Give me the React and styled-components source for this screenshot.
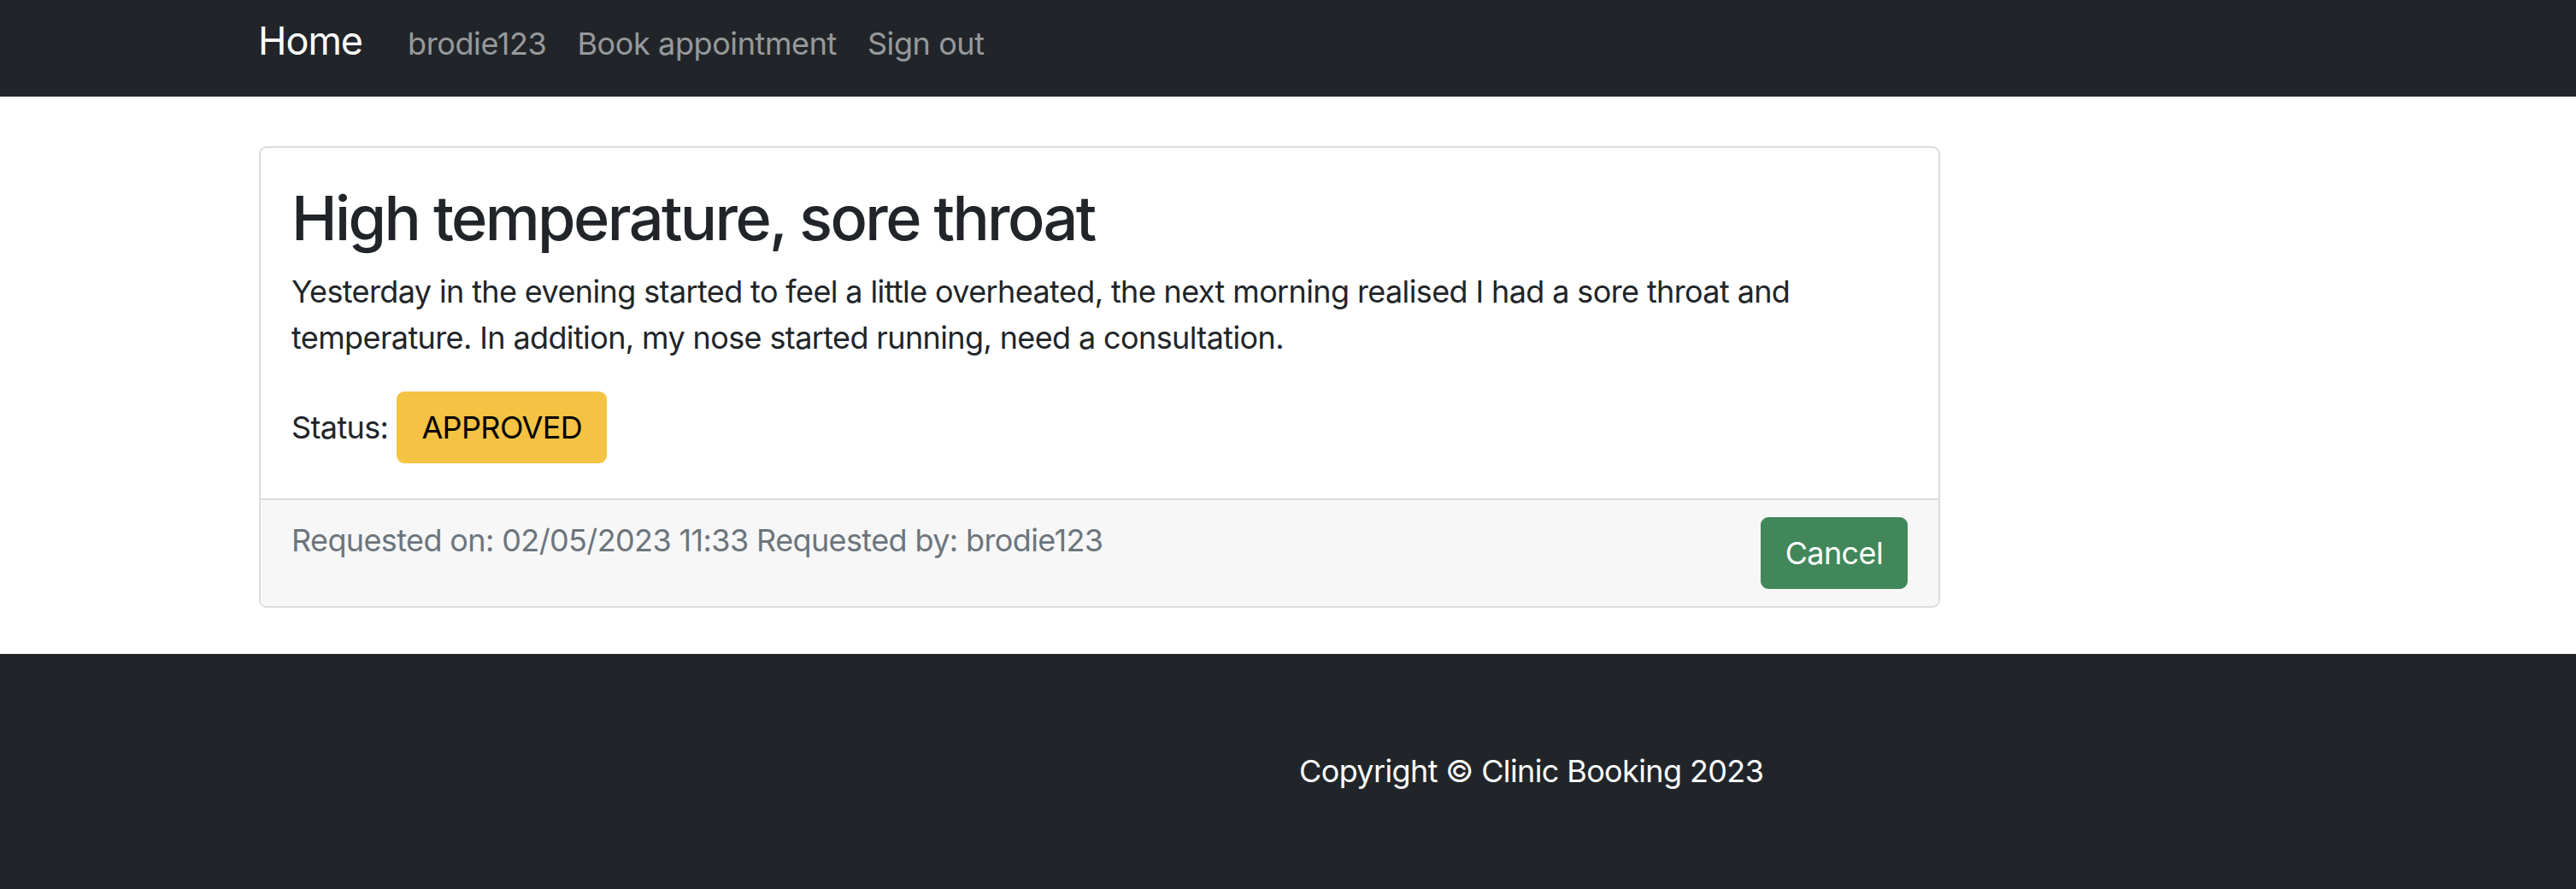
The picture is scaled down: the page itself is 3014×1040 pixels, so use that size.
import React from "react";
import styled, { createGlobalStyle } from "styled-components";

const GlobalStyle = createGlobalStyle`
  html, body { margin: 0; padding: 0; background: #ffffff; }
  body {
    font-family: Inter, "Open Sans", "Liberation Sans", sans-serif;
    color: #212529;
    font-size: 36px;
    line-height: 1.5;
    letter-spacing: -0.62px;
  }
  * { box-sizing: border-box; }
`;

const Page = styled.div`
  display: flex;
  flex-direction: column;
  min-height: 1040px;
`;

const NavBar = styled.nav`
  background: #212529;
  height: 113px;
  flex: none;
`;

const NavInner = styled.div`
  margin-left: 302px;
  display: flex;
  align-items: baseline;
  padding-top: 14px;
`;

const Brand = styled.a`
  font-size: 45px;
  line-height: 1.5;
  letter-spacing: -1px;
  color: #ffffff;
  text-decoration: none;
  margin-right: 35px;
`;

const NavLink = styled.a`
  font-size: 36px;
  line-height: 1.5;
  letter-spacing: -0.4px;
  color: rgba(255, 255, 255, 0.55);
  text-decoration: none;
  padding: 0 18px;
`;

const Main = styled.main`
  padding: 58px 0 54px 303px;
`;

const Card = styled.div`
  width: 1967px;
  border: 2px solid #dcdcdc;
  border-radius: 9px;
  background: #ffffff;
  overflow: hidden;
`;

const CardBody = styled.div`
  padding: 39px 36px 41px;
`;

const Title = styled.h2`
  margin: 0 0 16px;
  font-size: 72px;
  font-weight: 500;
  line-height: 1.2;
  letter-spacing: -2.6px;
  color: #212529;
`;

const Description = styled.p`
  margin: 0 0 36px;
  font-size: 36px;
  line-height: 54px;
`;

const StatusRow = styled.div`
  display: flex;
  align-items: center;
  gap: 10px;
  font-size: 36px;
  line-height: 54px;
`;

const Pill = styled.span`
  display: inline-block;
  padding: 13px 27px;
  border: 2px solid ${(p) => p.$bg};
  border-radius: 9px;
  background: ${(p) => p.$bg};
  color: ${(p) => p.$fg};
  font-size: 36px;
  line-height: 54px;
  font-family: inherit;
`;

const CardFooter = styled.div`
  display: flex;
  justify-content: space-between;
  align-items: flex-start;
  padding: 20px 36px 20px;
  background: #f7f7f7;
  border-top: 2px solid #dcdcdc;
`;

const Muted = styled.span`
  color: #6c757d;
  font-size: 36px;
  line-height: 54px;
`;

const Button = styled.button`
  padding: 13px 27px;
  border: 2px solid #41875a;
  border-radius: 9px;
  background: #41875a;
  color: #ffffff;
  font-family: inherit;
  font-size: 36px;
  line-height: 54px;
  letter-spacing: inherit;
  cursor: pointer;
`;

const Footer = styled.footer`
  flex: 1;
  background: #212529;
  color: #ffffff;
  padding: 110px 0 110px 1520px;
  font-size: 36px;
  line-height: 54px;
`;

export default function App() {
  return (
    <Page>
      <GlobalStyle />
      <NavBar>
        <NavInner>
          <Brand href="#">Home</Brand>
          <NavLink href="#">brodie123</NavLink>
          <NavLink href="#">Book appointment</NavLink>
          <NavLink href="#">Sign out</NavLink>
        </NavInner>
      </NavBar>
      <Main>
        <Card>
          <CardBody>
            <Title>High temperature, sore throat</Title>
            <Description>
              Yesterday in the evening started to feel a little overheated, the next morning realised I had a sore throat and temperature. In addition, my nose started running, need a consultation.
            </Description>
            <StatusRow>
              <span>Status:</span>
              <Pill $bg="#f5c343" $fg="#000000">APPROVED</Pill>
            </StatusRow>
          </CardBody>
          <CardFooter>
            <Muted>Requested on: 02/05/2023 11:33 Requested by: brodie123</Muted>
            <Button>Cancel</Button>
          </CardFooter>
        </Card>
      </Main>
      <Footer>Copyright © Clinic Booking 2023</Footer>
    </Page>
  );
}
